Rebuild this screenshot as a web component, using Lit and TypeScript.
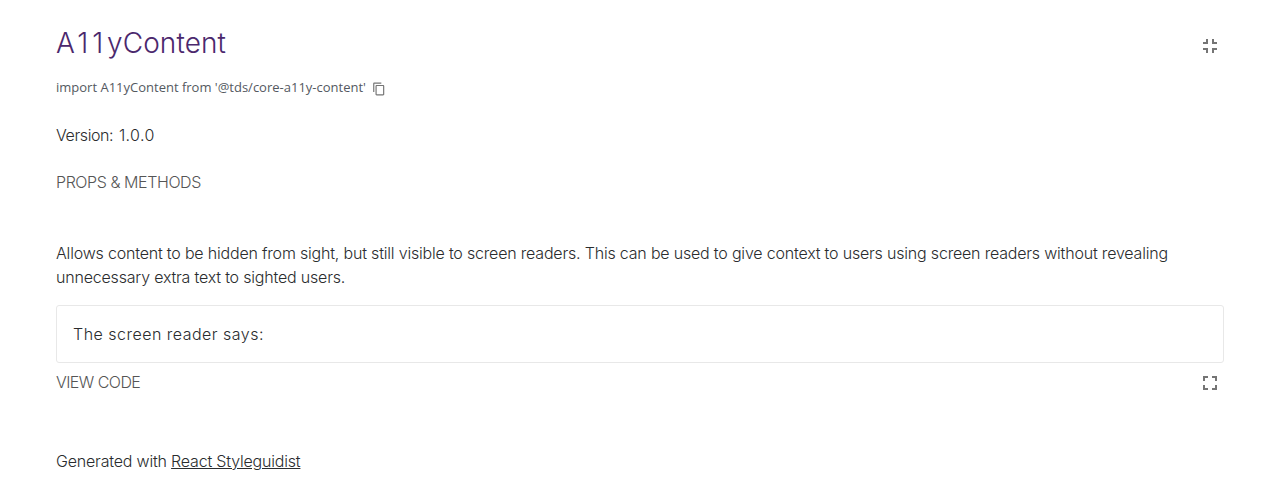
import { LitElement, html, css } from "lit";
import { customElement } from "lit/decorators.js";

@customElement("app-root")
export class AppRoot extends LitElement {
  static styles = css`
    :host { display: block; box-sizing: border-box; height: 489px; padding: 23px 56px 0; background: #fff; color: #2a2c2e; font: 300 16px/24px Inter, "Liberation Sans", sans-serif; letter-spacing: -0.19px; }
    .row { display: flex; justify-content: space-between; align-items: center; }
    .line { display: flex; white-space: nowrap; }
    h1 { margin: 0; font-size: 28px; line-height: 40px; font-weight: 300; color: #4b286d; letter-spacing: 0.1px; }
    .lead { letter-spacing: 2.5px; }
    .ones { letter-spacing: 3.8px; }
    .title { height: 40px; }
    .title .tool { margin-top: 6px; }
    .path { display: flex; align-items: center; gap: 6px; margin-top: 15px; height: 19px; font: 13px/19px "Open Sans", sans-serif; letter-spacing: 0; color: #54595f; }
    .path svg { margin-top: 3px; fill: #757575; }
    .version { margin-top: 26px; letter-spacing: -0.4px; word-spacing: 1.6px; }
    .num { letter-spacing: 0.4px; }
    .tab { color: #555; letter-spacing: -0.42px; }
    .props { margin-top: 23px; }
    .desc { margin-top: 47px; }
    .box { box-sizing: border-box; height: 58px; margin-top: 16px; padding: 16px; border: 1px solid #e8e8e8; border-radius: 3px; letter-spacing: 0.48px; }
    .code { height: 24px; margin-top: 7px; letter-spacing: -0.55px; }
    .code .tool { margin-top: 2px; }
    .foot { margin-top: 55px; }
    a { color: inherit; text-decoration: underline; }
    svg { display: block; fill: #757575; }
    .tool { margin-right: 2px; }
  `;
  render() {
    return html`
      <div class="row title"><h1><span class="lead">A</span><span class="ones">11</span>yContent</h1><svg class="tool" width="24" height="24" viewBox="0 0 24 24"><path d="M5 16h3v3h2v-5H5v2zm3-8H5v2h5V5H8v3zm6 11h2v-3h3v-2h-5v5zm2-11V5h-2v5h5V8h-3z"/></svg></div>
      <div class="path"><span>import A11yContent from '@tds/core-a11y-content'</span><svg width="14" height="14" viewBox="0 0 24 24"><path d="M16 1H4c-1.1 0-2 .9-2 2v14h2V3h12V1zm3 4H8c-1.1 0-2 .9-2 2v14c0 1.1.9 2 2 2h11c1.1 0 2-.9 2-2V7c0-1.1-.9-2-2-2zm0 16H8V7h11v14z"/></svg></div>
      <div class="line version"><span>Version: <span class="num">1.0.0</span></span></div>
      <div class="line tab props"><span>PROPS &amp; METHODS</span></div>
      <div class="desc"><div class="line"><span>Allows content to be hidden from sight, but still visible to screen readers. This can be used to give context to users using screen readers without revealing</span></div><div class="line"><span>unnecessary extra text to sighted users.</span></div></div>
      <div class="box">The screen reader says:</div>
      <div class="row tab code"><span>VIEW CODE</span><svg class="tool" width="24" height="24" viewBox="0 0 24 24"><path d="M7 14H5v5h5v-2H7v-3zm-2-4h2V7h3V5H5v5zm12 7h-3v2h5v-5h-2v3zM14 5v2h3v3h2V5h-5z"/></svg></div>
      <div class="foot">Generated with <a href="#">React Styleguidist</a></div>`;
  }
}
